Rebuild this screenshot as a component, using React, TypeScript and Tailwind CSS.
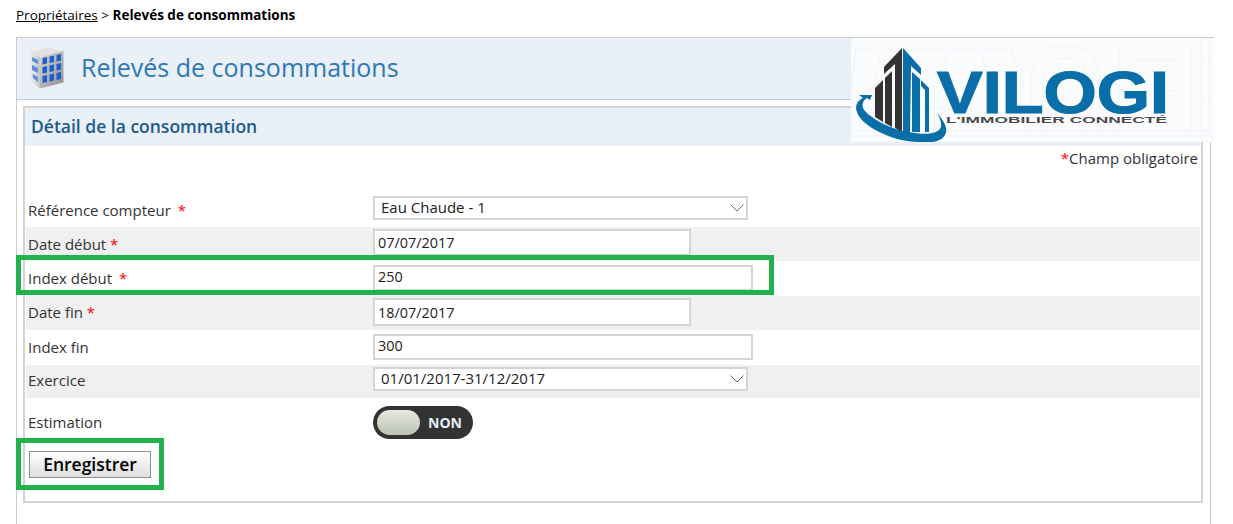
import React from "react";

const inputCls = "border-2 border-[#d4d4d4] bg-white pl-[3px] text-[14.4px] text-[#222] outline-none";
const labelCls = "w-[347px] pl-[2px] text-[15px] leading-[20px] text-[#333]";

function Star({ className = "" }: { className?: string }) {
    return <span className={"text-[#f00] " + className}>*</span>;
}

function SelectBox({ value }: { value: string }) {
    return (
        <div className="flex items-center justify-between w-[375px] h-[24px] border-2 border-[#d4d4d4] bg-white pl-[6px] pr-[2px] pb-[3px] text-[15px] leading-[18px] text-[#222]">
            <span>{value}</span>
            <svg className="mt-[3px]" width="14" height="10" viewBox="0 0 14 10" fill="none">
                <path d="M0.5 1.5 L7 8 L13.5 1.5" stroke="#666" strokeWidth="1" />
            </svg>
        </div>
    );
}

function Row({ label, gray, h, labelTop, ctrlTop, children }: { label: React.ReactNode; gray?: boolean; h: string; labelTop: string; ctrlTop: string; children: React.ReactNode }) {
    return (
        <div className={"flex items-start " + h + (gray ? " bg-[#f0f0f0]" : " bg-white")}>
            <div className={labelCls + " " + labelTop}>{label}</div>
            <div className={ctrlTop}>{children}</div>
        </div>
    );
}

function BuildingIcon() {
    return (
        <svg width="38" height="44" viewBox="0 0 38 44">
            <defs>
                <linearGradient id="bside" x1="0" y1="0" x2="1" y2="0">
                    <stop offset="0" stopColor="#f2f2f2" />
                    <stop offset="1" stopColor="#c4c4c4" />
                </linearGradient>
                <linearGradient id="bfront" x1="0" y1="0" x2="1" y2="1">
                    <stop offset="0" stopColor="#d8d8d8" />
                    <stop offset="1" stopColor="#8f8f8f" />
                </linearGradient>
            </defs>
            <path d="M0.5 5 L20 0.5 L34.5 4 L11 10 Z" fill="#e2e2e2" />
            <path d="M0.5 5 L11 10 L11 41.5 L2 34 Z" fill="url(#bside)" />
            <path d="M11 10 L34.5 4 L34.5 35.5 L11 41.5 Z" fill="url(#bfront)" />
            <g fill="#1d5fd0">
                <path d="M13.5 11 L18 10 L18 16.5 L13.5 17.5 Z" />
                <path d="M20.5 9.5 L25 8.5 L25 15 L20.5 16 Z" />
                <path d="M27.5 8 L32 7 L32 13.5 L27.5 14.5 Z" />
                <path d="M13.5 20 L18 19 L18 25.5 L13.5 26.5 Z" />
                <path d="M20.5 18.5 L25 17.5 L25 24 L20.5 25 Z" />
                <path d="M27.5 17 L32 16 L32 22.5 L27.5 23.5 Z" />
                <path d="M13.5 29 L18 28 L18 35 L13.5 36 Z" />
                <path d="M20.5 27.5 L25 26.5 L25 33.5 L20.5 34.5 Z" />
                <path d="M27.5 26 L32 25 L32 32 L27.5 33 Z" />
            </g>
            <g fill="#5f8fd6">
                <path d="M3 10 L9 13 L9 17 L3 14 Z" />
                <path d="M3 18 L9 21 L9 26 L3 23 Z" />
                <path d="M3.5 27 L9 30 L9 35 L4 31 Z" />
            </g>
        </svg>
    );
}

function Logo() {
    return (
        <svg width="363" height="104" viewBox="0 0 363 104" className="block">
            <rect width="363" height="104" fill="#fafbfd" />
            <g fill="none" stroke="#f1f3f8" strokeWidth="1">
                <path d="M0 12 H165 M5 12 L0 50 M30 12 L22 52 M60 12 L55 52 M95 12 L95 50 M130 12 L140 52 M160 12 L172 50" />
                <path d="M180 96 V40 Q180 8 215 8 Q248 8 248 40 V96 M192 96 V44 Q192 20 215 20 Q236 20 236 44 V96" />
                <path d="M268 96 V10 H340 V96 M280 22 H330 M272 34 H336 M280 60 Q292 44 304 60 M308 60 Q320 44 332 60" />
                <path d="M350 0 V96 M358 0 V96 M350 24 H363 M350 60 H363" />
                <path d="M0 98 H363 M0 92 H363" />
                <path d="M60 70 H110 V92 M20 70 H50" />
            </g>
            {/* tower, dark side */}
            <g fill="#333">
                <path d="M51 10 L33 29 L33 36 L44 26 L44 90 L51 94 Z" />
                <path d="M34 40 L41 33 L41 89 L34 85 Z" />
                <path d="M24 50 L32 42 L32 84 L24 79 Z" />
            </g>
            {/* tower, blue side */}
            <g fill="#0a6ea8">
                <path d="M52 10 L70 30 L70 37 L60 28 L59 94 L52 94 Z" />
                <path d="M61 34 L69 41 L69 94 L61 94 Z" />
                <path d="M70 42 L78 50 L78 94 L74 94 L74 52 L70 48 Z" />
            </g>
            {/* swoosh */}
            <path
                d="M21 57 L8 57 L12 60 C4 64 2 72 11 82 C20 92 45 104 68 104 C80 105 90 104 94 97 C98 90 92 82 86 75 C90 82 92 88 88 92 C84 96 72 97 58 94 C42 92 22 82 14 73 C10 68 11 63 16 60 L19 62 Z"
                fill="#0a6ea8"
            />
            <text
                x="86"
                y="75"
                fontFamily="Liberation Sans"
                fontWeight="700"
                fontSize="60"
                fill="#0a6ea8"
                stroke="#0a6ea8"
                strokeWidth="1.2"
                textLength="232"
                lengthAdjust="spacingAndGlyphs"
            >
                VILOGI
            </text>
            <text
                x="95"
                y="85"
                fontFamily="Liberation Sans"
                fontWeight="700"
                fontSize="9.5"
                fill="#4a4a4a"
                textLength="221"
                lengthAdjust="spacingAndGlyphs"
            >
                L'IMMOBILIER CONNECTÉ
            </text>
        </svg>
    );
}

export default function App() {
    return (
        <div className="relative w-[1233px] h-[524px] overflow-hidden bg-white font-['Open_Sans',sans-serif] text-[#222]">
            <div className="h-[37px] pl-4 pt-[6px] text-[13.5px] leading-[18px] text-black">
                <a className="underline">Propriétaires</a> &gt; <b className="font-bold">Relevés de consommations</b>
            </div>

            <div className="relative ml-4 w-[1195px] h-[487px] border border-b-0 border-[#ccc]">
                <div className="flex items-center h-[62px] bg-[#e9f0f7] border-b border-[#ccc] pl-[12px]">
                    <BuildingIcon />
                    <h1 className="ml-[14px] -mt-[2px] text-[25px] font-normal text-[#2f77b5]">Relevés de consommations</h1>
                </div>

                <div className="absolute left-[834px] -top-px border-t border-[#ccc]">
                    <Logo />
                </div>

                <div className="mt-[6px] ml-[6px] w-[1180px] h-[397px] border-2 border-[#d4d4d4]">
                    <div className="flex items-center h-[38px] bg-[#e9f0f7] pl-[6px]">
                        <h2 className="-mt-px text-[17.5px] font-semibold text-[#1d5a8e]">Détail de la consommation</h2>
                    </div>
                    <div className="px-[1px]">
                        <div className="h-[44px] pt-[1px] pr-[2px] text-right text-[15px] text-[#333]">
                            <Star />Champ obligatoire
                        </div>
                        <Row h="h-[37px]" labelTop="pt-[10px]" ctrlTop="pt-[6px]" label={<>Référence compteur <Star className="ml-[3px]" /></>}>
                            <SelectBox value="Eau Chaude - 1" />
                        </Row>
                        <Row h="h-[34px]" gray labelTop="pt-[7px]" ctrlTop="pt-[2px]" label={<>Date début <Star /></>}>
                            <input readOnly value="07/07/2017" className={inputCls + " w-[318px] h-[27px]"} />
                        </Row>
                        <Row h="h-[35px]" labelTop="pt-[7px]" ctrlTop="pt-[3px]" label={<>Index début <Star className="ml-[3px]" /></>}>
                            <input readOnly value="250" className={inputCls + " w-[380px] h-[26px] pb-[2px]"} />
                        </Row>
                        <Row h="h-[34px]" gray labelTop="pt-[6px]" ctrlTop="pt-[2px]" label={<>Date fin <Star /></>}>
                            <input readOnly value="18/07/2017" className={inputCls + " w-[318px] h-[28px]"} />
                        </Row>
                        <Row h="h-[35px]" labelTop="pt-[7px]" ctrlTop="pt-[3px]" label="Index fin">
                            <input readOnly value="300" className={inputCls + " w-[380px] h-[26px] pb-[2px]"} />
                        </Row>
                        <Row h="h-[33px]" gray labelTop="pt-[5px]" ctrlTop="pt-[2px]" label="Exercice">
                            <SelectBox value="01/01/2017-31/12/2017" />
                        </Row>
                        <div className="flex items-start h-[53px]">
                            <div className={labelCls + " pt-[14px]"}>Estimation</div>
                            <div className="flex items-center mt-[8px] w-[100px] h-[33px] rounded-full bg-[#333] pl-[4px]">
                                <div className="w-[43px] h-[25px] rounded-full bg-gradient-to-b from-[#e6e9df] to-[#bcc3b2]" />
                                <span className="ml-[8px] text-[14px] font-bold text-[#e8eef4]">NON</span>
                            </div>
                        </div>
                        <button className="block ml-[3px] w-[122px] h-[27px] border border-[#8f8f8f] bg-gradient-to-b from-white to-[#dedede] text-[17.5px] font-semibold text-black leading-none">
                            Enregistrer
                        </button>
                    </div>
                </div>
            </div>

            {/* green highlight boxes */}
            <div className="absolute left-4 top-[255px] w-[758px] h-[40px] border-[5px] border-[#22b14c]" />
            <div className="absolute left-4 top-[438px] w-[148px] h-[52px] border-[5px] border-[#22b14c]" />
        </div>
    );
}
